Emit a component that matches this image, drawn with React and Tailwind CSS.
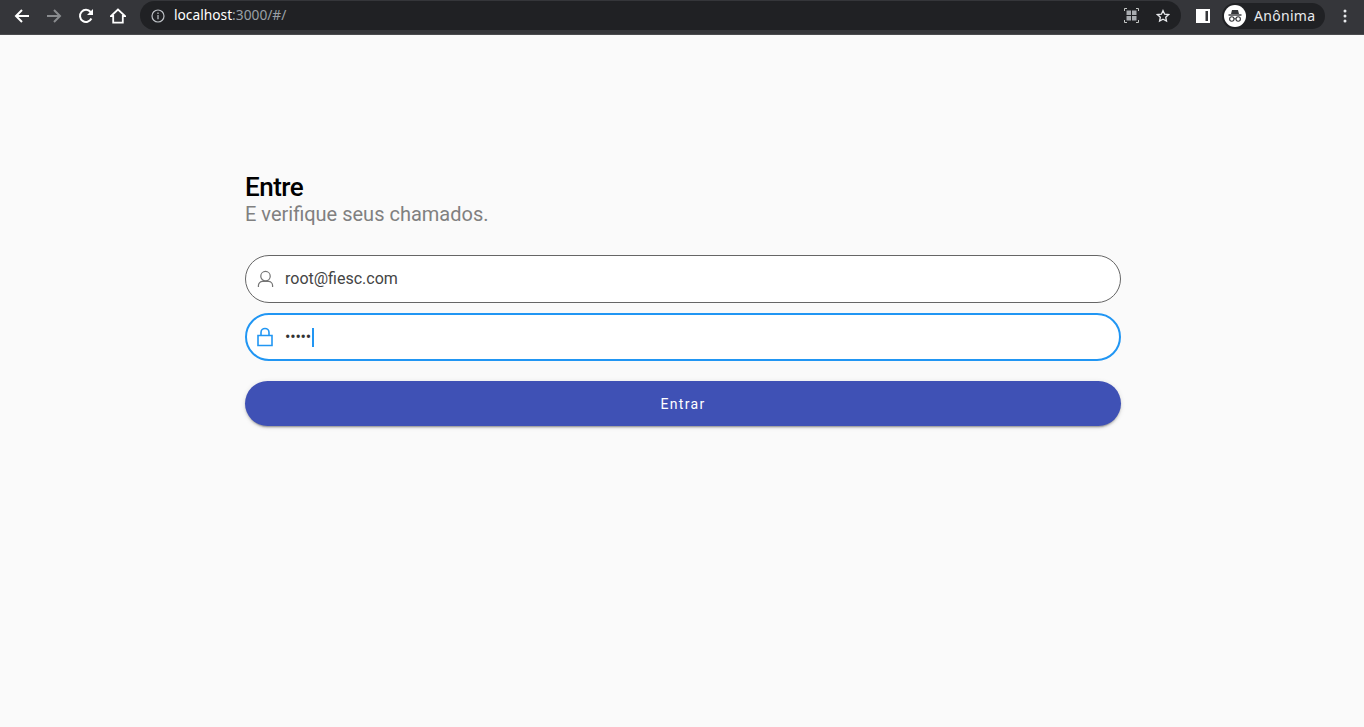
import React from "react";

function Back() {
  return (
    <svg width="16" height="16" viewBox="0 0 16 16" fill="none" stroke="currentColor" strokeWidth="2">
      <path d="M15 8H2M8 2L2 8l6 6" />
    </svg>
  );
}

function Forward() {
  return (
    <svg width="16" height="16" viewBox="0 0 16 16" fill="none" stroke="currentColor" strokeWidth="2">
      <path d="M1 8h13M8 2l6 6-6 6" />
    </svg>
  );
}

function Reload() {
  return (
    <svg width="16" height="16" viewBox="0 0 16 16" fill="none">
      <path d="M13.4 10.5A6 6 0 1 1 12.6 4" stroke="currentColor" strokeWidth="2" />
      <path d="M15 1v6H9z" fill="currentColor" />
    </svg>
  );
}

function Home() {
  return (
    <svg width="16" height="16" viewBox="0 0 16 16" fill="none" stroke="currentColor" strokeWidth="1.8">
      <path d="M8 1.5L1 8h2.2v6.6h9.6V8H15z" strokeLinejoin="miter" />
    </svg>
  );
}

function Info() {
  return (
    <svg width="14" height="14" viewBox="0 0 14 14" fill="none" stroke="#bdc1c6" strokeWidth="1.2">
      <circle cx="7" cy="7" r="6" />
      <path d="M7 6v4.2M7 3.6v1.3" />
    </svg>
  );
}

function QrIcon() {
  return (
    <svg width="15" height="15" viewBox="0 0 15 15" fill="none">
      <path d="M.5 3V.5H3M12 .5h2.5V3M14.5 12v2.5H12M3 14.5H.5V12" stroke="#c4c7c5" strokeWidth="1" />
      <path d="M2.5 2.5h4.5v4.5H2.5zM8 2.5h4.5v4.5H8zM2.5 8h4.5v4.5H2.5zM8 8h4.5v4.5H8z" fill="#a8abaf" />
    </svg>
  );
}

function Star() {
  return (
    <svg width="14" height="14" viewBox="0 0 16 16" fill="none" stroke="#e8eaed" strokeWidth="1.5">
      <path d="M8 1.8l1.9 4.1 4.5.5-3.3 3 .9 4.4L8 11.6l-3.9 2.2.9-4.4-3.3-3 4.5-.5z" />
    </svg>
  );
}

function SidePanel() {
  return (
    <svg width="14" height="14" viewBox="0 0 14 14" fill="none">
      <path d="M1 1h12v12H1z" stroke="#fff" strokeWidth="2" />
      <path d="M1 1h8.5v12H1z" fill="#fff" />
    </svg>
  );
}

function Incognito() {
  return (
    <span className="flex h-[22px] w-[22px] items-center justify-center rounded-full bg-white">
      <svg width="16" height="16" viewBox="0 0 16 16" fill="none">
        <path d="M5 2h6l1 4H4z" fill="#35363a" />
        <path d="M1.5 7h13" stroke="#35363a" strokeWidth="1.4" />
        <circle cx="4.8" cy="11" r="2.2" stroke="#35363a" strokeWidth="1.1" />
        <circle cx="11.2" cy="11" r="2.2" stroke="#35363a" strokeWidth="1.1" />
        <path d="M7 10.8h2" stroke="#35363a" strokeWidth="1" />
      </svg>
    </span>
  );
}

function Dots() {
  return (
    <svg width="4" height="14" viewBox="0 0 4 14" fill="#e8eaed">
      <circle cx="2" cy="2" r="1.5" />
      <circle cx="2" cy="7" r="1.5" />
      <circle cx="2" cy="12" r="1.5" />
    </svg>
  );
}

function BrowserBar() {
  return (
    <div className="flex h-[35px] items-start border-b border-[#4a4b4e] bg-[#35363a] font-['Noto_Sans',sans-serif]">
      <div className="flex h-[31px] w-[140px] shrink-0 items-center pl-[14px] text-white">
        <Back />
        <span className="ml-[16px] text-[#8a8c8f]"><Forward /></span>
        <span className="ml-[16px]"><Reload /></span>
        <span className="ml-[16px]"><Home /></span>
      </div>
      <div className="mt-[1px] flex h-[29px] w-[1041px] items-center rounded-full bg-[#202124] pl-[11px] pr-[11px]">
        <Info />
        <span className="ml-[9px] text-[13.75px] text-white">localhost<span className="text-[#9aa0a6]">:3000/#/</span></span>
        <span className="ml-auto flex items-center gap-[17px]">
          <QrIcon />
          <Star />
        </span>
      </div>
      <div className="flex h-[31px] flex-1 items-center pl-[15px]">
        <SidePanel />
        <div className="ml-[12px] flex h-[26px] w-[103px] items-center gap-[8px] rounded-full bg-[#202124] pl-[2px]">
          <Incognito />
          <span className="text-[14px] tracking-[0.3px] text-[#e8eaed]">Anônima</span>
        </div>
        <span className="ml-[18px]"><Dots /></span>
      </div>
    </div>
  );
}

export default function App() {
  return (
    <div className="flex h-[727px] flex-col overflow-hidden bg-[#fafafa] font-['Roboto',sans-serif]">
      <BrowserBar />
      <div className="mx-auto w-[876px] translate-x-[1px] pt-[136px]">
        <h1 className="text-[26px] leading-[32px] font-medium tracking-[-0.5px] text-black">Entre</h1>
        <p className="-mt-[1px] text-[20px] leading-[24px] text-[#808080]">E verifique seus chamados.</p>

        <div className="mt-[29px] flex h-[48px] items-center rounded-full border border-[#666] bg-white pl-[11px]">
          <svg width="17" height="18" viewBox="0 0 18 18" fill="none" stroke="#757575" strokeWidth="1.3">
            <circle cx="9" cy="6" r="5" />
            <path d="M1.5 17.5v-1.5a4.5 4.5 0 0 1 4.5-4.5h6a4.5 4.5 0 0 1 4.5 4.5v1.5" />
          </svg>
          <span className="ml-[11px] text-[16px] text-[#444]">root@fiesc.com</span>
        </div>

        <div className="mt-[10px] flex h-[48px] items-center rounded-full border-2 border-[#2196f3] bg-white pl-[10px]">
          <svg width="18" height="20" viewBox="0 0 18 20" fill="none" stroke="#2196f3" strokeWidth="1.6" className="-ml-[1px]">
            <path d="M2 8.5h14v10H2z" />
            <path d="M5 8.5V5.5a4 4 0 0 1 8 0v3" />
          </svg>
          <span className="ml-[11px] text-[16px] leading-none tracking-[-0.2px] text-[#333]">•••••</span>
          <span className="ml-[1px] h-[19px] w-[2px] bg-[#2196f3]" />
        </div>

        <button className="mt-[20px] block h-[45px] w-full rounded-full bg-[#3f51b5] pt-[2px] text-[14px] font-[450] tracking-[1.3px] text-white shadow-[0_3px_1px_-2px_rgba(0,0,0,0.2),0_2px_2px_0_rgba(0,0,0,0.14),0_1px_5px_0_rgba(0,0,0,0.12)]">
          Entrar
        </button>
      </div>
    </div>
  );
}
